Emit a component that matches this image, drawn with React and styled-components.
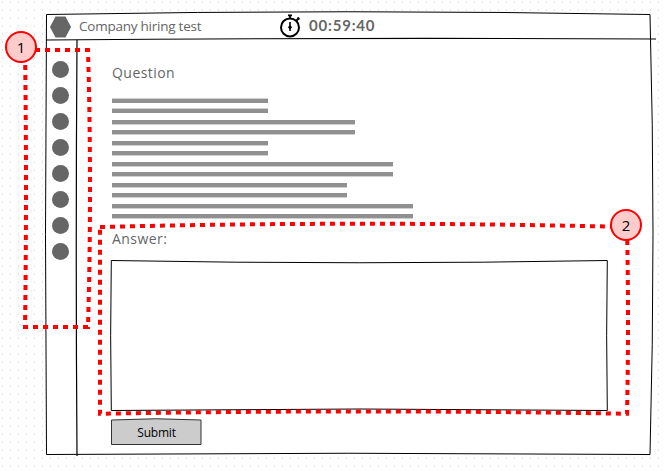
import React from "react";
import styled, { createGlobalStyle } from "styled-components";

const GlobalStyle = createGlobalStyle`
  * { box-sizing: border-box; }
  body { margin: 0; background: #fff; }
`;

const Canvas = styled.div`
  position: relative;
  width: 664px;
  height: 471px;
  padding: 14px 14px 16px 46px;
  overflow: hidden;
  background-color: #fff;
  background-image: conic-gradient(from 90deg at 7px 6px, #e4e4e4 90deg, transparent 0);
  background-size: 8px 8px;
  background-position: 3px 3px;
  font-family: "Open Sans", sans-serif;
  color: #666;
`;

const Window = styled.main`
  position: relative;
  width: 604px;
  height: 441px;
  display: flex;
  flex-direction: column;
`;

/* Hand-drawn outline behind the content of its parent */
const Sketch = styled.svg`
  position: absolute;
  inset: 0;
  width: 100%;
  height: 100%;
  overflow: visible;
  fill: ${(p) => p.$fill || "#fff"};
  stroke: ${(p) => p.$stroke || "#000"};
  stroke-width: ${(p) => p.$weight || 1};
  pointer-events: none;
`;

const Header = styled.header`
  position: relative;
  height: 25px;
  flex: none;
  display: flex;
  align-items: center;
  padding-left: 4px;
`;

const Logo = styled.svg`
  width: 21px;
  height: 22px;
  fill: #666;
`;

const Label = styled.span`
  font-size: ${(p) => p.$size || 14}px;
  line-height: 20px;
  letter-spacing: ${(p) => p.$spacing || 0}px;
  font-weight: ${(p) => (p.$bold ? 700 : 400)};
  white-space: nowrap;
`;

const Title = styled(Label)`
  width: 200px;
  margin: -2px 0 0 8px;
`;

const StopwatchIcon = styled.svg`
  width: 22px;
  height: 24px;
  margin-top: -2px;
  fill: none;
  stroke: #000;
`;

const Timer = styled(Label)`
  margin: -4px 0 0 8px;
  font-family: Lato, sans-serif;
`;

const Body = styled.div`
  position: relative;
  flex: 1;
  display: flex;
`;

const Steps = styled.nav`
  width: 31px;
  padding: 22px 0 0 6px;
  display: flex;
  flex-direction: column;
  gap: 9px;
`;

const Step = styled.i`
  width: 17px;
  height: 17px;
  border-radius: 50%;
  background: #666;
`;

const Content = styled.section`
  flex: 1;
  padding: 24px 0 0 35px;
  display: flex;
  flex-direction: column;
  align-items: flex-start;
`;

const Paragraph = styled.div`
  margin-top: 16px;
  height: 130px;
  display: flex;
  flex-direction: column;
  gap: 11px;
`;

const LinePair = styled.div`
  width: ${(p) => p.$width}px;
  height: 10px;
  display: flex;
  flex-direction: column;
  gap: 6px;
`;

const Line = styled.i`
  flex: none;
  height: 4px;
  background: #909090;
  box-shadow: 0 ${(p) => (p.$first ? -1 : 1)}px #d0d0d0;
`;

const AnswerBox = styled.div`
  position: relative;
  width: 496px;
  height: 150px;
  margin: 11px 0 0 -1px;
`;

const SubmitButton = styled.button`
  position: relative;
  width: 91px;
  height: 26px;
  margin: 9px 0 0 -1px;
  padding: 2px 0 0;
  border: 0;
  background: none;
  color: #000;
  font-family: inherit;
`;

const ButtonText = styled(Label)`
  position: relative;
`;

const Callouts = styled.svg`
  position: absolute;
  inset: 0;
  width: 664px;
  height: 471px;
  fill: none;
  stroke: red;
  stroke-width: 4;
  stroke-dasharray: 5 5;
  pointer-events: none;
`;

const Badge = styled.span`
  position: absolute;
  left: ${(p) => p.$x}px;
  top: ${(p) => p.$y}px;
  width: 32px;
  height: 32px;
  border: 2px solid red;
  border-radius: 50%;
  background: #fcc;
  color: #000;
  font-size: 15px;
  font-weight: 500;
  line-height: 29px;
  text-align: center;
`;

const LINE_WIDTHS = [156, 243, 156, 281, 235, 301];

export default function App() {
  return (
    <>
      <GlobalStyle />
      <Canvas>
        <Window>
          <Sketch>
            <path d="M.5 .5Q302-5 604 .5Q610 220 604 440.5Q302 438 .5 440.5Q-1.5 220 .5 .5Z" />
          </Sketch>
          <Header>
            <Sketch $weight={1.2}>
              <path d="M0 26Q302 23.5 610 25" fill="none" />
            </Sketch>
            <Logo viewBox="0 0 21 22">
              <path d="M5.5.5h10L21 11l-5.5 10.5h-10L0 11z" />
            </Logo>
            <Title $size={13.5} $spacing={-0.24}>Company hiring test</Title>
            <StopwatchIcon viewBox="0 0 22 24">
              <circle cx="11" cy="13.4" r="9" strokeWidth="2" />
              <path d="M9 1.4h4M11 2v3M17.5 6.5l2-2M18.4 3.5l2 2" strokeWidth="1.8" />
              <path d="M11 8v9" strokeWidth="1.6" />
              <circle cx="11" cy="13.3" r="1.3" fill="#000" />
            </StopwatchIcon>
            <Timer $size={15} $spacing={0.8} $bold>00:59:40</Timer>
          </Header>
          <Body>
            <Sketch $weight={1.2}>
              <path d="M31 1Q29.5 208 31 417" fill="none" />
            </Sketch>
            <Steps>
              {Array.from({ length: 8 }, (_, i) => <Step key={i} />)}
            </Steps>
            <Content>
              <Label $spacing={0.45}>Question</Label>
              <Paragraph>
                {LINE_WIDTHS.map((width, i) => (
                  <LinePair key={i} $width={width}>
                    <Line $first={i === 0} />
                    <Line $first={i === 0} />
                  </LinePair>
                ))}
              </Paragraph>
              <Label $spacing={0.45}>Answer:</Label>
              <AnswerBox>
                <Sketch>
                  <path d="M.3 .5Q248 5 496.3 .5Q495 75 496.3 150.5Q248 147.5 .3 150.5Q-1 75 .3 .5Z" />
                </Sketch>
              </AnswerBox>
              <SubmitButton>
                <Sketch $fill="#ccc" $stroke="#333">
                  <path d="M.5 1Q45-1.5 90 1V25.5H.5Z" />
                </Sketch>
                <ButtonText $size={12} $spacing={-0.2}>Submit</ButtonText>
              </SubmitButton>
            </Content>
          </Body>
        </Window>
        <Callouts>
          <path d="M25 50H88Q92 188 88 327H25Q27 188 25 50Z" />
          <path d="M100 227Q363 220.5 627 227Q629 320 627 413.8Q363 409 100 413.8Z" />
        </Callouts>
        <Badge $x={5} $y={31}>1</Badge>
        <Badge $x={610} $y={209}>2</Badge>
      </Canvas>
    </>
  );
}
